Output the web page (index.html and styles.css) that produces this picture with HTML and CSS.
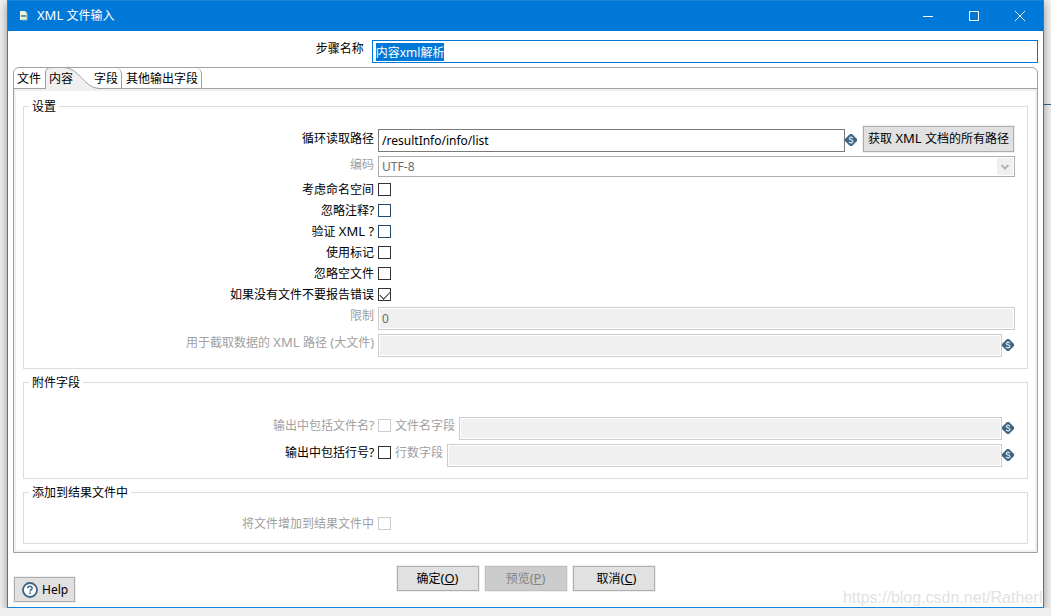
FILE: index.html
```html
<!DOCTYPE html>
<html lang="zh-CN">
<head>
<meta charset="utf-8">
<title>XML 文件输入</title>
<link rel="stylesheet" href="styles.css">
</head>
<body>
<svg width="0" height="0" class="defs" aria-hidden="true">
  <symbol id="variable" viewBox="0 0 12 12">
    <path d="M5 0H7L12 5V7L7 12H5L0 7V5Z" fill="#3d6482"/>
    <path d="M8 4.200C7.600 3.500 7 3.300 6 3.300C4.900 3.300 4.200 3.800 4.200 4.500C4.200 6.300 8 5.600 8 7.400C8 8.300 7.200 8.700 6 8.700C5 8.700 4.300 8.400 3.900 7.800" fill="none" stroke="#d5e0e8" stroke-width="1.200"/>
    <path d="M6 1.900V3.300M6 8.700V10.100" fill="none" stroke="#b5c6d3"/>
  </symbol>
</svg>
<div class="canvas-line"></div>
<main class="window">
  <header class="titlebar">
    <svg class="app-icon" viewBox="0 0 12 13" aria-hidden="true">
      <path d="M1 1H6L8 3V10H1Z" fill="#e9f1dd"/>
      <path d="M2 5H7V7H2Z" fill="#5f99a3"/>
      <path d="M8 3V10H3" fill="none" stroke="#8fb9ae"/>
      <path d="M9 10L11 12" stroke="#1d5f92"/>
    </svg>
    <h1 class="title"><span class="latin">XML </span>文件输入</h1>
    <button class="window-button" aria-label="最小化"><svg viewBox="0 0 12 12"><path d="M1 6.500H11" /></svg></button>
    <button class="window-button" aria-label="最大化"><svg viewBox="0 0 12 12"><path d="M1.500 1.500H10.500V10.500H1.500Z"/></svg></button>
    <button class="window-button" aria-label="关闭"><svg viewBox="0 0 12 12"><path d="M1 1L11 11M11 1L1 11"/></svg></button>
  </header>
  <form class="dialog">
    <div class="step-row">
      <label class="step-label" for="step">步骤名称</label>
      <input class="text-box step-input" id="step" type="text" value="内容xml解析">
    </div>
    <div class="tab-folder">
      <div class="tabs" role="tablist">
        <button type="button" class="tab" role="tab">文件</button>
        <button type="button" class="tab selected" role="tab" aria-selected="true">
          <svg class="tab-shape" viewBox="0 0 56 22" aria-hidden="true">
            <path d="M0.500 22V6Q0.500 0.500 6 0.500H19C34 0.500 39 21 54 21.500V22Z" fill="#f0f0f0"/>
            <path d="M0.500 22V6Q0.500 0.500 6 0.500H19C34 0.500 39 21 54 21.500H56" fill="none" stroke="#a0a0a0"/>
          </svg>
          <span class="tab-text">内容</span>
        </button>
        <button type="button" class="tab edged" role="tab">字段</button>
        <button type="button" class="tab edged" role="tab">其他输出字段</button>
      </div>
      <div class="panel" role="tabpanel">
        <fieldset class="group settings">
          <legend>设置</legend>
          <div class="row tall">
            <label class="label" for="path">循环读取路径</label>
            <div class="controls">
              <input class="text-box" id="path" type="text" value="/resultInfo/info/list">
              <svg class="variable"><use href="#variable"/></svg>
              <button type="button" class="button paths-button">获取<span class="latin"> XML </span>文档的所有路径</button>
            </div>
          </div>
          <div class="row">
            <label class="label muted" for="encoding">编码</label>
            <div class="select-box">
              <select id="encoding" disabled><option>UTF-8</option></select>
              <svg class="chevron" viewBox="0 0 16 17" aria-hidden="true"><path d="M4.500 7L8 10.500L11.500 7" fill="none" stroke="#b5b5b5" stroke-width="2"/></svg>
            </div>
          </div>
          <div class="row check-row"><label class="label" for="ns">考虑命名空间</label><input class="check" type="checkbox" id="ns"></div>
          <div class="row check-row"><label class="label" for="comment">忽略注释?</label><input class="check blue" type="checkbox" id="comment"></div>
          <div class="row check-row"><label class="label" for="validate">验证<span class="latin"> XML ?</span></label><input class="check blue" type="checkbox" id="validate"></div>
          <div class="row check-row"><label class="label" for="token">使用标记</label><input class="check" type="checkbox" id="token"></div>
          <div class="row check-row"><label class="label" for="empty">忽略空文件</label><input class="check" type="checkbox" id="empty"></div>
          <div class="row check-row"><label class="label" for="nofile">如果没有文件不要报告错误</label><input class="check" type="checkbox" id="nofile" checked></div>
          <div class="row">
            <label class="label muted" for="limit">限制</label>
            <input class="text-box" id="limit" type="text" value="0" disabled>
          </div>
          <div class="row">
            <label class="label muted" for="prune">用于截取数据的<span class="latin"> XML </span>路径<span class="latin"> (</span>大文件<span class="latin">)</span></label>
            <div class="controls">
              <input class="text-box" id="prune" type="text" disabled>
              <svg class="variable"><use href="#variable"/></svg>
            </div>
          </div>
        </fieldset>
        <fieldset class="group extra">
          <legend>附件字段</legend>
          <div class="row">
            <label class="label muted" for="inc-name">输出中包括文件名?</label>
            <div class="controls">
              <input class="check" type="checkbox" id="inc-name" disabled>
              <label class="side-label muted" for="name-field">文件名字段</label>
              <input class="text-box" id="name-field" type="text" disabled>
              <svg class="variable"><use href="#variable"/></svg>
            </div>
          </div>
          <div class="row">
            <label class="label" for="inc-row">输出中包括行号?</label>
            <div class="controls">
              <input class="check" type="checkbox" id="inc-row">
              <label class="side-label muted" for="row-field">行数字段</label>
              <input class="text-box" id="row-field" type="text" disabled>
              <svg class="variable"><use href="#variable"/></svg>
            </div>
          </div>
        </fieldset>
        <fieldset class="group result">
          <legend>添加到结果文件中</legend>
          <div class="row check-row"><label class="label muted" for="add">将文件增加到结果文件中</label><input class="check" type="checkbox" id="add" disabled></div>
        </fieldset>
      </div>
    </div>
    <footer class="footer">
      <button type="button" class="button help">
        <svg class="help-icon" viewBox="0 0 16 16" aria-hidden="true">
          <circle cx="8" cy="8" r="7" fill="#fff" stroke="#3d6482" stroke-width="1.800"/>
          <path d="M5.800 6.300C5.800 3.700 10.200 3.700 10.200 6.200C10.200 7.700 8 7.700 8 9.500" fill="none" stroke="#3d6482" stroke-width="1.500"/>
          <rect x="7.200" y="10.500" width="1.600" height="1.600" fill="#3d6482"/>
        </svg>Help</button>
      <div class="actions">
        <button type="button" class="button action">确定<span class="latin">(<u>O</u>)</span></button>
        <button type="button" class="button action" disabled>预览<span class="latin">(<u>P</u>)</span></button>
        <button type="button" class="button action cancel">取消<span class="latin">(<u>C</u>)</span></button>
      </div>
    </footer>
  </form>
  <div class="watermark">https://blog.csdn.net/RatherI</div>
</main>
<script src="app.js"></script>
</body>
</html>
```
FILE: styles.css
```css
* { box-sizing: border-box; }

body {
  margin: 0;
  background: #f0f0f0;
  color: #000;
  font: 12px/16px "Noto Sans", "Noto Sans CJK SC", sans-serif;
  overflow: hidden;
}

button, input, select { font: inherit; color: inherit; margin: 0; }

.latin { font-size: 13px; line-height: 1; }

.defs { position: absolute; }

.canvas-line {
  position: absolute;
  top: 104px;
  right: 0;
  width: 8px;
  height: 1px;
  background: #3d6482;
}

.window {
  position: relative;
  margin: 0 7px;
  border: 1px solid #1883d7;
  background: #fff;
  box-shadow: 0 3px 9px rgba(0, 0, 0, 0.4);
}

.titlebar {
  display: flex;
  align-items: center;
  height: 30px;
  padding-left: 11px;
  background: #0078d7;
  color: #fff;
}

.app-icon { width: 12px; height: 13px; }

.title { flex: 1; margin: 0 0 0 6px; font-size: 12px; font-weight: 400; }

.window-button {
  display: flex;
  align-items: center;
  justify-content: center;
  width: 46px;
  height: 30px;
  padding: 0;
  border: 0;
  background: none;
}

.window-button svg { width: 12px; height: 12px; fill: none; stroke: #fff; }

.dialog { padding: 9px 5px 5px; }

.step-row {
  display: grid;
  grid-template-columns: 35% minmax(0, 1fr);
  margin-bottom: 4px;
}

.step-label { padding: 1px 8px 0 0; text-align: right; }

.text-box {
  display: block;
  width: 100%;
  min-width: 0;
  height: 23px;
  padding: 0 3px;
  border: 1px solid #7a7a7a;
  border-radius: 0;
  background: #fff;
  outline: none;
}

.text-box:disabled {
  border-color: #ccc;
  background: #f0f0f0;
  box-shadow: inset 0 0 0 1px #fff;
  color: #6d6d6d;
}

.step-input { border-color: #0078d7; }
.step-input::selection { background: #0078d7; color: #fff; }

.tab-folder { border: 1px solid #a0a0a0; border-radius: 6px 6px 0 0; }

.tabs { display: flex; height: 21px; border-bottom: 1px solid #a0a0a0; }

.tab {
  height: 20px;
  padding: 2px 4px 0 3px;
  border: 0;
  background: none;
  white-space: nowrap;
}

.tab.edged {
  padding-right: 3px;
  padding-left: 4px;
  border-right: 1px solid #a0a0a0;
  border-radius: 0 6px 0 0;
}

.tab.selected { position: relative; width: 45px; padding: 2px 0 0 4px; text-align: left; }

.tab-shape { position: absolute; left: 0; top: -1px; width: 56px; height: 22px; }
.tab-text { position: relative; }

.panel { padding: 7px 7px 6px; border: 2px solid #f0f0f0; }

.group {
  display: grid;
  gap: 4px;
  min-width: 0;
  margin: 0;
  border: 1px solid #dcdcdc;
}

.group + .group { margin-top: 5px; }
.group legend { height: 16px; padding: 1px 3px 0; }
.settings { padding: 12px 12px 11px 5px; }
.extra { padding: 27px 12px 11px 5px; }
.result { padding: 15px 12px 11px 5px; }

.row {
  display: grid;
  grid-template-columns: 35% minmax(0, 1fr);
  column-gap: 4px;
  align-items: start;
}

.label { padding-top: 1px; text-align: right; white-space: nowrap; }
.muted { color: #a0a0a0; }

.tall { align-items: end; }
.tall .label { align-self: center; padding-top: 0; }

.controls { display: flex; align-items: center; }
.tall .controls { align-items: flex-end; }
.controls .text-box { flex: 1; }

.variable { flex: none; width: 12px; height: 12px; margin: 0 1px 1px 0; }
.tall .variable { margin-bottom: 6px; }

.check-row { height: 17px; align-items: center; }
.check-row .label { padding-top: 0; }

.check {
  appearance: none;
  display: block;
  flex: none;
  width: 13px;
  height: 13px;
  border: 1px solid #333;
  background: #fff;
}

.check.blue { border-color: #26486a; }
.check:disabled { border-color: #ccc; }

.check:checked::after {
  content: "";
  display: block;
  width: 9px;
  height: 5px;
  margin: 2px 0 0 1px;
  border: solid #333;
  border-width: 0 0 1px 1px;
  transform: rotate(-45deg);
}

.controls .check { align-self: flex-start; margin-top: 2px; }
.side-label { align-self: flex-start; padding: 1px 4px 0; white-space: nowrap; }

.select-box { position: relative; }

.select-box select {
  appearance: none;
  display: block;
  width: 100%;
  height: 21px;
  padding: 0 20px 0 3px;
  border: 1px solid #adadad;
  border-radius: 0;
  background: #fff;
  color: #6d6d6d;
  opacity: 1;
}

.chevron {
  position: absolute;
  top: 2px;
  right: 2px;
  width: 16px;
  height: 17px;
  background: #f0f0f0;
}

.button {
  height: 25px;
  padding: 0 4px;
  border: 1px solid #adadad;
  border-radius: 0;
  background: #e1e1e1;
  box-shadow: 0 0 0 1px #f0f0f0;
  white-space: nowrap;
}

.button:disabled { border-color: #bfbfbf; background: #ccc; color: #838383; }

.paths-button { height: 26px; margin: 0 1px 0 5px; padding: 0 4px; }

.footer {
  display: grid;
  grid-template-columns: 1fr auto 1fr;
  min-height: 49px;
  padding-top: 13px;
}

.actions { display: flex; gap: 6px; align-items: flex-start; }
.action { width: 82px; }
.cancel { padding-left: 10px; }

.help {
  display: flex;
  align-items: center;
  justify-self: start;
  align-self: end;
  gap: 4px;
  margin-left: 1px;
  padding: 0 6px 0 7px;
}

.help-icon { width: 16px; height: 16px; }

.watermark {
  position: absolute;
  right: 0;
  bottom: 0;
  color: #e2e2e2;
  font: 16px/18px "Liberation Sans", sans-serif;
  pointer-events: none;
}
```
FILE: app.js
```js
const step = document.getElementById("step");
step.focus();
step.select();
```
